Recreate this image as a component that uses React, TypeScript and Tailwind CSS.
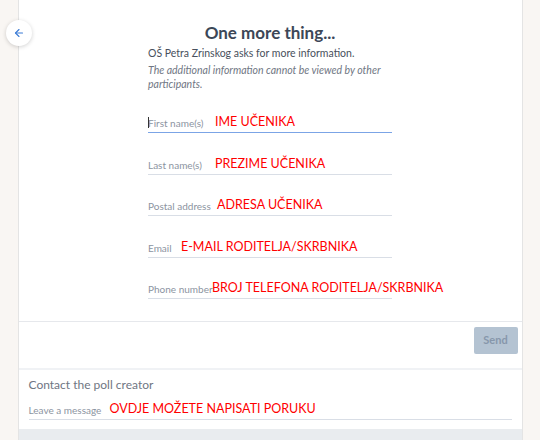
import { ArrowLeft } from "lucide-react";

type Field = {
  label: string;
  value: string;
  labelW: string;
  focused?: boolean;
};

const fields: Field[] = [
  { label: "First name(s)", value: "IME UČENIKA", labelW: "w-[67px]", focused: true },
  { label: "Last name(s)", value: "PREZIME UČENIKA", labelW: "w-[67px]" },
  { label: "Postal address", value: "ADRESA UČENIKA", labelW: "w-[69px]" },
  { label: "Email", value: "E-MAIL RODITELJA/SKRBNIKA", labelW: "w-[33px]" },
  { label: "Phone number", value: "BROJ TELEFONA RODITELJA/SKRBNIKA", labelW: "w-[64px]" },
];

const red = { fontFamily: 'Lato, "Liberation Sans", sans-serif' };

export default function App() {
  return (
    <div
      className="relative flex h-[440px] w-[540px] justify-center overflow-hidden bg-[#f9f6f3]"
      style={{ fontFamily: 'Lato, "Noto Sans", sans-serif' }}
    >
      <div className="flex w-[505px] flex-col border-x border-[#e4e4e4] bg-white">
        {/* form */}
        <div className="flex flex-col items-center pt-[21px]">
          <h1 className="text-[17px] font-bold leading-6 text-[#3c4757]">One more thing...</h1>
          <div className="mt-0 w-[244px]">
            <p className="text-[10.5px] leading-[16px] text-[#48505c]">
              OŠ Petra Zrinskog asks for more information.
            </p>
            <p className="mt-[2px] text-[10.5px] italic leading-[14px] text-[#6f7683]">
              The additional information cannot be viewed by other participants.
            </p>

            <div className="mt-[21px] flex flex-col gap-[20.5px]">
              {fields.map((f) => (
                <div
                  key={f.label}
                  className={`flex h-[21px] items-end whitespace-nowrap border-b pb-[2px] ${
                    f.focused ? "border-[#7ba4e6]" : "border-[#d9dee6]"
                  }`}
                >
                  <span className={`mb-[1px] shrink-0 text-[10px] leading-3 text-[#8c94a1] ${f.labelW}`}>
                    {f.focused && <span className="mr-[-1px] inline-block h-[11px] w-px translate-y-[1px] bg-[#333]" />}
                    {f.label}
                  </span>
                  <span className="text-[12.5px] leading-4 text-[#ff0000]" style={red}>
                    {f.value}
                  </span>
                </div>
              ))}
            </div>
          </div>
        </div>

        {/* send */}
        <div className="mt-[22px] flex h-[47px] justify-end border-t border-[#e6e8ec] pr-[4px] pt-[5px]">
          <button className="h-[27px] w-[44px] rounded-[2px] bg-[#b4c3d2] text-[11px] font-bold text-[#8797ab]">
            Send
          </button>
        </div>

        {/* contact */}
        <div className="flex flex-col border-t-2 border-[#f0f2f5] px-[10px] pt-[5px]">
          <p className="text-[12px] leading-5 text-[#6f7683]">Contact the poll creator</p>
          <div className="mt-[4px] flex h-[21px] items-end whitespace-nowrap border-b border-[#d9dee6] pb-[2px]">
            <span className="mb-[1px] w-[81px] shrink-0 text-[10px] leading-3 text-[#8c94a1]">Leave a message</span>
            <span className="text-[12.5px] leading-4 text-[#ff0000]" style={red}>
              OVDJE MOŽETE NAPISATI PORUKU
            </span>
          </div>
        </div>
        <div className="mt-auto h-[11px] bg-[#e9ecef]" />
      </div>

      <button className="absolute left-[6px] top-[20px] flex h-[26px] w-[26px] items-center justify-center rounded-full bg-white shadow-[0_1px_4px_rgba(0,0,0,0.18)]">
        <ArrowLeft size={12} strokeWidth={2.25} className="text-[#3a7bd5]" />
      </button>
    </div>
  );
}
